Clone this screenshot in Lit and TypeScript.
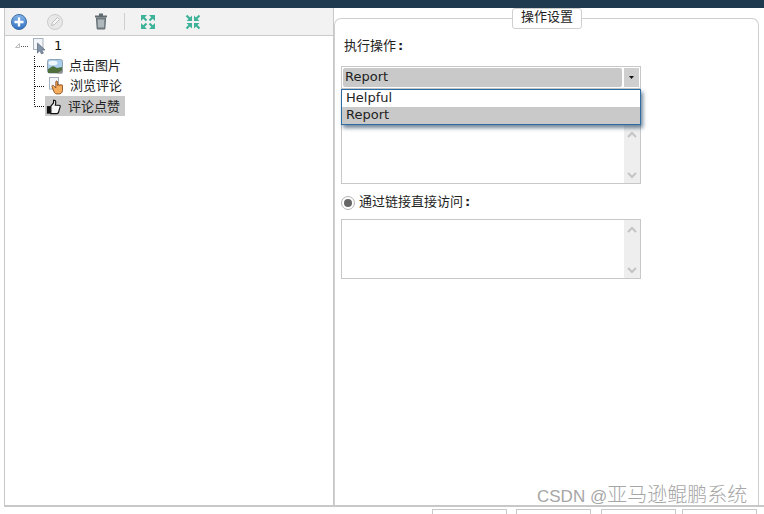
import { LitElement, html, css } from "lit";
import { customElement } from "lit/decorators.js";

@customElement("app-root")
export class AppRoot extends LitElement {
  static styles = css`
    * { box-sizing: border-box; }
    :host { display: block; width: 764px; height: 514px; overflow: hidden; position: relative; background: #fff;
      font-family: "DejaVu Sans", "Noto Sans CJK SC", sans-serif; font-size: 13px; color: #222; }
    .top { height: 8px; background: #1f3a4e; }
    .main { display: flex; height: 497px; padding-left: 4px; }
    .left { width: 330px; flex: none; border-left: 1px solid #c8c8c8; border-right: 1px solid #c8c8c8; display: flex; flex-direction: column; }
    .toolbar { height: 28px; background: #f2f2f2; border-bottom: 1px solid #c9c9c9; display: flex; align-items: center; flex: none; }
    .toolbar svg { display: block; flex: none; }
    .t1 { margin-left: 5px; }
    .t2 { margin-left: 18px; }
    .t3 { margin-left: 30px; }
    .sep { width: 1px; height: 17px; background: #cfcfcf; margin-left: 16px; flex: none; }
    .t4 { margin-left: 15px; }
    .t5 { margin-left: 29px; }
    .tree { padding: 0 0 0 10px; display: flex; flex-direction: column; }
    .row { height: 20px; display: flex; align-items: center; flex: none; }
    .row svg { display: block; flex: none; }
    .rootlabel { margin-left: 5px; color: #111; padding-bottom: 2px; }
    .kids { margin-left: 19px; display: flex; flex-direction: column; }
    .kid-text { margin-left: 6px; padding-bottom: 3px; }
    .page-text { margin-left: 5px; }
    .sel .kid-text { padding-bottom: 2px; }
    .ml2 { margin-left: 2px; }
    .ml4 { margin-left: 4px; }
    .thumb { margin: 2px 0 0 1px; }
    .sel { background: #c9c9c9; width: 80px; height: 20px; display: flex; align-items: center; }
    .right { flex: 1; padding: 10px 5px 0 0; display: flex; min-width: 0; }
    .panel { flex: 1; border: 1px solid #cfcfcf; border-bottom: none; border-radius: 7px 7px 0 0; position: relative; padding: 19px 0 0 6px; display: flex; flex-direction: column; align-items: flex-start; }
    .legend { position: absolute; left: 177px; top: -11px; width: 70px; height: 21px; background: #fff; border: 1px solid #cfcfcf; border-radius: 3px; display: flex; align-items: center; justify-content: center; padding-bottom: 5px; line-height: 1; }
    .lab { height: 16px; line-height: 16px; margin-left: 3px; padding-bottom: 1px; }
    .colon { margin-left: 2px; font-weight: bold; }
    .select { margin-top: 12px; width: 300px; height: 23px; border: 1px solid #c8c8c8; padding: 1px; display: flex; gap: 2px; flex: none; position: relative; background: #fff; }
    .value { flex: 1; background: #c9c9c9; border-radius: 2px; padding-left: 2px; line-height: 17px; }
    .arrow { width: 15px; background: #cfcfcf; display: flex; align-items: center; justify-content: center; }
    .popup { position: absolute; left: -1px; top: 22px; width: 300px; height: 36px; background: #fff; border: 1px solid #2e6da4; box-shadow: 2px 3px 4px rgba(40, 70, 100, .65); z-index: 2; display: flex; flex-direction: column; }
    .opt { height: 17px; line-height: 16px; padding-left: 4px; }
    .opt.on { background: #c9c9c9; }
    .area { width: 300px; height: 60px; border: 1px solid #c8c8c8; display: flex; justify-content: flex-end; flex: none; }
    .a1 { margin-top: 35px; }
    .a2 { margin-top: 7px; }
    .sb { width: 16px; background: #eee; display: flex; flex-direction: column; justify-content: space-between; padding: 6px 0 4px; align-items: center; }
    .sb svg { display: block; }
    .radio-row { margin-top: 8px; height: 20px; display: flex; align-items: center; gap: 4px; }
    .radio { width: 14px; height: 14px; border: 1px solid #b4b4b4; border-radius: 50%; display: flex; align-items: center; justify-content: center; background: #fff; flex: none; margin-top: 1px; }
    .radio i { width: 8px; height: 8px; border-radius: 50%; background: #666; display: block; }
    .radio-text { padding-bottom: 4px; }
    .bottom { height: 9px; margin-left: 4px; border-top: 2px solid #c8c8c8; display: flex; padding: 2px 0 0 428px; gap: 9px; overflow: hidden; }
    .btn { width: 75px; height: 20px; border: 1px solid #c8c8c8; flex: none; background: #fff; }
    .btn:nth-child(3) { margin-left: 1px; }
    .btn:nth-child(4) { margin-left: -3px; }
    .mark { position: absolute; left: 537px; top: 483px; font-family: "Liberation Sans", "Noto Sans CJK SC", sans-serif; font-size: 17px; line-height: 24px; color: #a6a6a6; white-space: nowrap; text-shadow: 0 0 1px #fff; }
    .mark span { font-size: 20px; font-weight: 300; }
  `;

  private expand() {
    return html`<svg width="16" height="16" viewBox="0 0 16 16" fill="#3fb39a" stroke="none">
      <path d="M1 1h6L1 7zM15 1H9l6 6zM1 15h6l-6-6zM15 15H9l6-6z"/>
      <path d="M3 3l3.500 3.500M13 3L9.500 6.500M3 13l3.500-3.500M13 13L9.500 9.500" stroke="#3fb39a" stroke-width="2.200"/>
    </svg>`;
  }
  private collapse() {
    return html`<svg width="16" height="16" viewBox="0 0 16 16" fill="#3fb39a" stroke="none">
      <path d="M7 7V1.500L1.500 7zM9 7V1.500L14.500 7zM7 9v5.500L1.500 9zM9 9v5.500L14.500 9z"/>
      <path d="M5 5L1.500 1.500M11 5l3.500-3.500M5 11l-3.500 3.500M11 11l3.500 3.500" stroke="#3fb39a" stroke-width="2.200"/>
    </svg>`;
  }
  private conn(last = false) {
    return html`<svg width="11" height="20" viewBox="0 0 11 20">
      <path d="M.5 0V${last ? 10.5 : 20}M1 10.500h10" stroke="#111" stroke-dasharray="1 1" fill="none"/>
    </svg>`;
  }
  private chev(up: boolean) {
    return html`<svg width="10" height="7" viewBox="0 0 10 7"><path d="${up ? "M1 6l4-4 4 4" : "M1 1l4 4 4-4"}" fill="none" stroke="#c4c4c4" stroke-width="2"/></svg>`;
  }

  render() {
    return html`
      <div class="top"></div>
      <div class="main">
        <div class="left">
          <div class="toolbar">
            <svg class="t1" width="18" height="18" viewBox="0 0 18 18">
              <defs><linearGradient id="bl" x1="0" y1="0" x2="0" y2="1"><stop offset="0" stop-color="#86b6ea"/><stop offset="1" stop-color="#2f6fc0"/></linearGradient></defs>
              <circle cx="9" cy="9" r="7.500" fill="url(#bl)" stroke="#3a6ea8"/>
              <path d="M9 4.500v9M4.500 9h9" stroke="#fff" stroke-width="2.400"/>
            </svg>
            <svg class="t2" width="18" height="18" viewBox="0 0 18 18">
              <circle cx="9" cy="9" r="7.500" fill="#e8e8e8" stroke="#cccccc"/>
              <path d="M5.500 12.500l1-3 5-5 2 2-5 5z" fill="#f6f6f6" stroke="#bdbdbd"/>
            </svg>
            <svg class="t3" width="14" height="17" viewBox="0 0 14 17">
              <path d="M5 1.500h4M1 3.500h12" stroke="#5f6b70" stroke-width="2" fill="none"/>
              <path d="M2.500 5h9l-.7 11H3.200z" fill="#8a959a" stroke="#5a6468"/>
              <path d="M5 7v7M7 7v7M9 7v7" stroke="#d6dcdf" stroke-width="1"/>
            </svg>
            <div class="sep"></div>
            <span class="t4">${this.expand()}</span>
            <span class="t5">${this.collapse()}</span>
          </div>
          <div class="tree">
            <div class="row">
              <svg width="18" height="20" viewBox="0 0 18 20"><path d="M.5 11.500l4-4v4z" fill="#fff" stroke="#bbb"/><path d="M6 10.500h7" stroke="#555" stroke-dasharray="1 1"/></svg>
              <svg width="16" height="20" viewBox="0 0 16 20">
                <rect x=".5" y="2.500" width="9.500" height="11" fill="#f2f5f9" stroke="#a8b2be"/>
                <path d="M4.500 7v10l2.300-2.200 1.800 3.200 1.800-.9-1.800-3.100H12z" fill="#8494a8" stroke="#56657a" stroke-width=".7"/>
              </svg>
              <span class="rootlabel">1</span>
            </div>
            <div class="kids">
              <div class="row">
                ${this.conn()}
                <svg class="ml2" width="16" height="15" viewBox="0 0 16 15">
                  <rect x=".5" y=".5" width="15" height="13.500" rx="2" fill="#a9cdec" stroke="#8ea2b4"/>
                  <path d="M1 10l5-3 4 2 5-1v6H1z" fill="#4f6f3c"/>
                  <ellipse cx="6" cy="4" rx="4.500" ry="2.300" fill="#eef6fc"/>
                  <path d="M10 14.500l5.500-4v4z" fill="#8c8c8c"/>
                </svg>
                <span class="kid-text">点击图片</span>
              </div>
              <div class="row">
                ${this.conn()}
                <svg class="ml4" width="16" height="18" viewBox="0 0 16 18">
                  <rect x=".5" y=".5" width="9" height="11.500" fill="#f2f5fa" stroke="#a8b2be"/>
                  <path d="M3 9.500l1.800 5c.8 2 2 2.500 4.200 2.500 2.500 0 4.500-1 4.500-3.500V8.500c0-1-1.500-1-1.500 0 0-1.200-1.700-1.200-1.700 0 0-1.200-1.700-1.200-1.700 0V5c0-1.300-1.800-1.300-1.800 0v6L4.500 8.500c-.6-.8-1.800 0-1.500 1z" fill="#f3ad5c" stroke="#7d3f10" stroke-width=".8"/>
                </svg>
                <span class="kid-text page-text">浏览评论</span>
              </div>
              <div class="row">
                ${this.conn(true)}
                <div class="sel">
                  <svg class="thumb" width="16" height="16" viewBox="0 0 18 18">
                    <path d="M1 8h4.500v8.500H1z" fill="#111"/>
                    <path d="M5.500 8l3-3.500V1.500c2.500-.5 3 1.500 2 5.500h4c1.500 0 1.800 1.200 1.300 2.200l-1.800 6c-.3 1-1 1.300-2 1.300H5.500z" fill="#f7f7f7" stroke="#111" stroke-width="1.300"/>
                  </svg>
                  <span class="kid-text">评论点赞</span>
                </div>
              </div>
            </div>
          </div>
        </div>
        <div class="right">
          <div class="panel">
            <div class="legend">操作设置</div>
            <div class="lab">执行操作<span class="colon">:</span></div>
            <div class="select">
              <div class="value">Report</div>
              <div class="arrow"><svg width="5" height="3" viewBox="0 0 5 3"><path d="M0 0h5L2.500 3z" fill="#111"/></svg></div>
              <div class="popup">
                <div class="opt">Helpful</div>
                <div class="opt on">Report</div>
              </div>
            </div>
            <div class="area a1"><div class="sb">${this.chev(true)}${this.chev(false)}</div></div>
            <div class="radio-row"><span class="radio"><i></i></span><span class="radio-text">通过链接直接访问<span class="colon">:</span></span></div>
            <div class="area a2"><div class="sb">${this.chev(true)}${this.chev(false)}</div></div>
          </div>
        </div>
      </div>
      <div class="bottom">
        <div class="btn"></div><div class="btn"></div><div class="btn"></div><div class="btn"></div>
      </div>
      <div class="mark">CSDN @<span>亚马逊鲲鹏系统</span></div>
    `;
  }
}
